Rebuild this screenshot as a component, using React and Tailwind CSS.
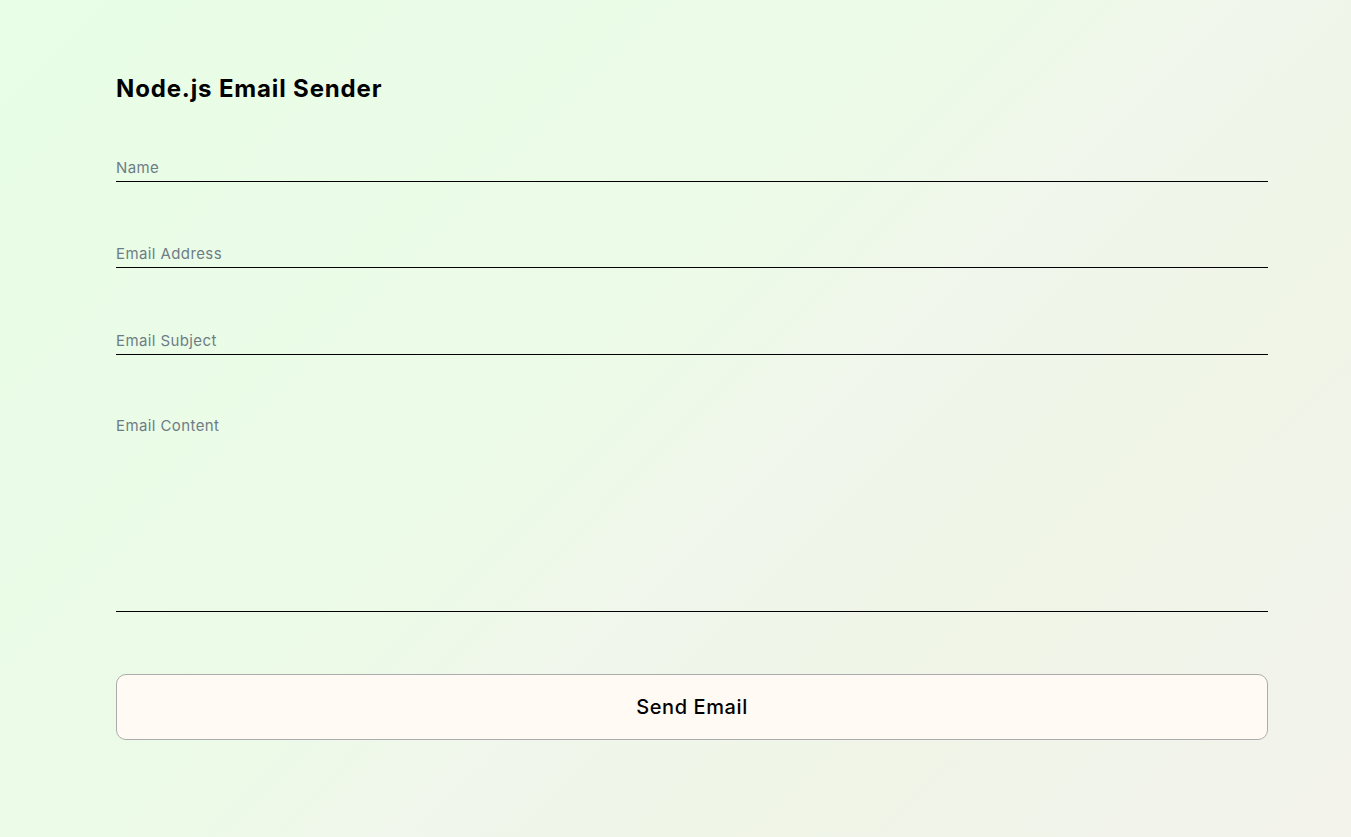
import React, { useState } from 'react';

export default function App() {
  const [form, setForm] = useState({ name: '', email: '', subject: '', content: '' });

  const handleChange = (e) => {
    setForm({ ...form, [e.target.name]: e.target.value });
  };

  const inputClass =
    'w-full h-[40px] pt-[12px] bg-transparent border-0 border-b border-black outline-none text-[15px] tracking-[0.4px] text-gray-900 placeholder:text-[#6e7c86]';

  return (
    <div
      className="min-h-[837px] w-full bg-[linear-gradient(135deg,#e8fee6_0%,#ecfae7_45%,#f1f6ec_58%,#eff5e7_70%,#f3f3ec_100%)]"
      style={{ fontFamily: 'Inter, "Open Sans", sans-serif' }}
    >
      <div className="ml-[116px] w-[1152px] pt-[75px]">
        <h2 className="text-[24px] leading-[28px] font-bold text-black tracking-[0.85px]">Node.js Email Sender</h2>

        {/* Form */}
        <form onSubmit={(e) => e.preventDefault()} className="mt-[39px] flex flex-col">
          <input name="name" value={form.name} onChange={handleChange} placeholder="Name" className={inputClass} />
          <input
            name="email"
            value={form.email}
            onChange={handleChange}
            placeholder="Email Address"
            className={inputClass + ' mt-[46px]'}
          />
          <input
            name="subject"
            value={form.subject}
            onChange={handleChange}
            placeholder="Email Subject"
            className={inputClass + ' mt-[47px]'}
          />
          <textarea
            name="content"
            value={form.content}
            onChange={handleChange}
            placeholder="Email Content"
            className="mt-[46px] w-full h-[211px] pt-[14px] resize-none bg-transparent border-0 border-b border-black outline-none text-[15px] tracking-[0.4px] text-gray-900 placeholder:text-[#6e7c86]"
          />
          <button
            type="submit"
            className="mt-[62px] h-[66px] w-full rounded-[10px] border border-[#ababab] bg-[#fffbf4] text-[20px] tracking-[0.6px] font-medium text-black"
          >
            Send Email
          </button>
        </form>
      </div>
    </div>
  );
}
